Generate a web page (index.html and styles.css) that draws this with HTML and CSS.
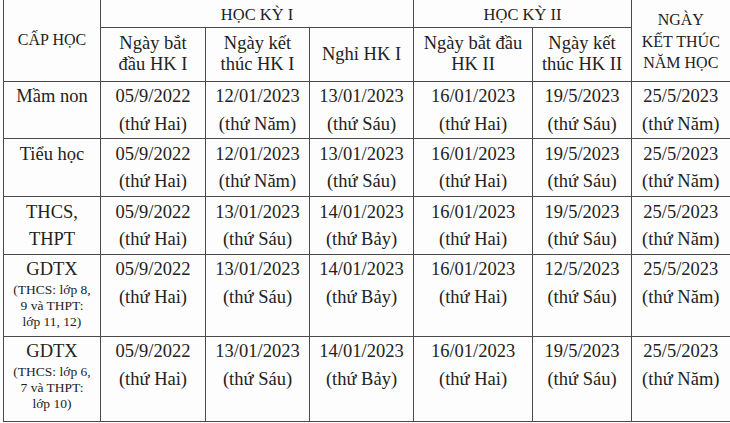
FILE: index.html
```html
<!DOCTYPE html>
<html lang="vi">
<head>
<meta charset="utf-8">
<link rel="stylesheet" href="styles.css">
</head>
<body>
<table class="sched">
  <colgroup>
    <col class="c0"><col class="c1"><col class="c2"><col class="c3"><col class="c4"><col class="c5"><col class="c6">
  </colgroup>
  <thead>
    <tr class="r-top">
      <th rowspan="2" class="cap">CẤP HỌC</th>
      <th colspan="3" class="term">HỌC KỲ I</th>
      <th colspan="2" class="term">HỌC KỲ II</th>
      <th rowspan="2" class="end">NGÀY<br>KẾT THÚC<br>NĂM HỌC</th>
    </tr>
    <tr class="r-sub">
      <th>Ngày bắt<br>đầu HK I</th>
      <th>Ngày kết<br>thúc HK I</th>
      <th>Nghỉ HK I</th>
      <th>Ngày bắt đầu<br>HK II</th>
      <th>Ngày kết<br>thúc HK II</th>
    </tr>
  </thead>
  <tbody>
    <tr class="r1">
      <td>Mầm non</td>
      <td>05/9/2022<br>(thứ Hai)</td>
      <td>12/01/2023<br>(thứ Năm)</td>
      <td>13/01/2023<br>(thứ Sáu)</td>
      <td>16/01/2023<br>(thứ Hai)</td>
      <td>19/5/2023<br>(thứ Sáu)</td>
      <td>25/5/2023<br>(thứ Năm)</td>
    </tr>
    <tr class="r2">
      <td>Tiểu học</td>
      <td>05/9/2022<br>(thứ Hai)</td>
      <td>12/01/2023<br>(thứ Năm)</td>
      <td>13/01/2023<br>(thứ Sáu)</td>
      <td>16/01/2023<br>(thứ Hai)</td>
      <td>19/5/2023<br>(thứ Sáu)</td>
      <td>25/5/2023<br>(thứ Năm)</td>
    </tr>
    <tr class="r3">
      <td>THCS,<br>THPT</td>
      <td>05/9/2022<br>(thứ Hai)</td>
      <td>13/01/2023<br>(thứ Sáu)</td>
      <td>14/01/2023<br>(thứ Bảy)</td>
      <td>16/01/2023<br>(thứ Hai)</td>
      <td>19/5/2023<br>(thứ Sáu)</td>
      <td>25/5/2023<br>(thứ Năm)</td>
    </tr>
    <tr class="r4">
      <td>GDTX<span class="note">(THCS: lớp 8,<br>9 và THPT:<br>lớp 11, 12)</span></td>
      <td>05/9/2022<br>(thứ Hai)</td>
      <td>13/01/2023<br>(thứ Sáu)</td>
      <td>14/01/2023<br>(thứ Bảy)</td>
      <td>16/01/2023<br>(thứ Hai)</td>
      <td>12/5/2023<br>(thứ Sáu)</td>
      <td>25/5/2023<br>(thứ Năm)</td>
    </tr>
    <tr class="r5">
      <td>GDTX<span class="note">(THCS: lớp 6,<br>7 và THPT:<br>lớp 10)</span></td>
      <td>05/9/2022<br>(thứ Hai)</td>
      <td>13/01/2023<br>(thứ Sáu)</td>
      <td>14/01/2023<br>(thứ Bảy)</td>
      <td>16/01/2023<br>(thứ Hai)</td>
      <td>19/5/2023<br>(thứ Sáu)</td>
      <td>25/5/2023<br>(thứ Năm)</td>
    </tr>
  </tbody>
</table>
</body>
</html>
```

FILE: styles.css
```css
html, body {
  margin: 0;
  padding: 0;
  background: #fdfdfd;
  overflow: hidden;
}

.sched {
  margin-left: 3px;
  border-collapse: collapse;
  table-layout: fixed;
  width: 726px;
  font-family: "Liberation Serif", "Times New Roman", serif;
  color: #222;
}

.c0 { width: 97px; }
.c1 { width: 105px; }
.c2 { width: 104px; }
.c3 { width: 104px; }
.c4 { width: 119px; }
.c5 { width: 99px; }
.c6 { width: 98px; }

.sched th,
.sched td {
  border: 1px solid #4a4a4a;
  padding: 0;
  text-align: center;
  font-weight: normal;
  font-family: "Liberation Serif", "Times New Roman", serif;
}

.sched th:last-child,
.sched td:last-child {
  border-right: none;
}

.sched .r-top th {
  border-top: none;
}

.r-top { height: 27px; }
.r-sub { height: 54px; }
.r1 { height: 57px; }
.r2 { height: 58px; }
.r3 { height: 58px; }
.r4 { height: 82px; }
.r5 { height: 85px; }

.sched .term {
  font-size: 16.5px;
  line-height: 20px;
  vertical-align: middle;
  padding-top: 3px;
}

.sched .cap {
  font-size: 16px;
  line-height: 20px;
  vertical-align: middle;
}

.sched .end {
  font-size: 16px;
  line-height: 21.5px;
  vertical-align: top;
  padding-top: 9px;
}

.sched .r-sub th {
  font-size: 18.5px;
  line-height: 21px;
  vertical-align: middle;
}

.sched td {
  font-size: 18.5px;
  line-height: 27.5px;
  vertical-align: top;
  padding-top: 1.5px;
}

.sched .r4 td,
.sched .r5 td {
  padding-top: 1px;
}

.note {
  display: block;
  font-size: 13.5px;
  line-height: 16px;
  margin-top: -2px;
}
```
